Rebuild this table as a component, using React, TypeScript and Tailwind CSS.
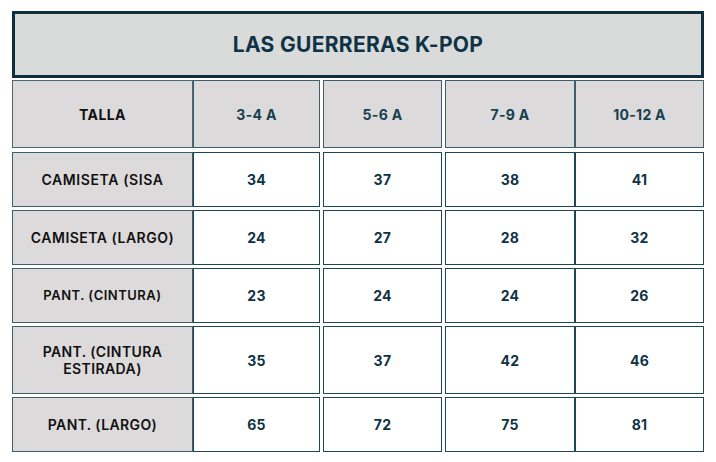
const cols = [
  "w-[181px]",
  "w-[127px]",
  "ml-[3px] w-[119px]",
  "ml-[3px] w-[130px]",
  "w-[129px]",
];

const rows: { label: string[]; box: string; text: string; values: string[] }[] = [
  { label: ["CAMISETA (SISA"], box: "mt-[4px] h-[55px]", text: "text-[14px] tracking-[0.6px]", values: ["34", "37", "38", "41"] },
  { label: ["CAMISETA (LARGO)"], box: "mt-[3px] h-[55px]", text: "text-[14px] tracking-[0.5px]", values: ["24", "27", "28", "32"] },
  { label: ["PANT. (CINTURA)"], box: "mt-[3px] h-[55px]", text: "text-[13px] tracking-[0.5px]", values: ["23", "24", "24", "26"] },
  { label: ["PANT. (CINTURA", "ESTIRADA)"], box: "mt-[3px] h-[68px]", text: "text-[14px] tracking-[0.4px]", values: ["35", "37", "42", "46"] },
  { label: ["PANT. (LARGO)"], box: "mt-[3px] h-[55px]", text: "text-[14px] tracking-[0.4px]", values: ["65", "72", "75", "81"] },
];

const sizes = ["3-4 A", "5-6 A", "7-9 A", "10-12 A"];

export default function App() {
  return (
    <div className="w-[716px] h-[462px] bg-white pt-[11px] pl-[12px] font-['Inter',sans-serif]">
      <div className="w-[692px] h-[67px] border-[3px] border-[#0f2f3f] bg-[#d9dbdb] flex items-center justify-center">
        <h1 className="text-[21px] font-bold text-[#0f3345] tracking-[0.3px]">LAS GUERRERAS K-POP</h1>
      </div>

      <div className="mt-[2px] flex h-[68px]">
        <div className={`${cols[0]} border border-[#4b6873] bg-[#dcdadb] flex items-center justify-center text-[14px] tracking-[0.4px] font-bold text-[#111]`}>
          TALLA
        </div>
        {sizes.map((s, i) => (
          <div
            key={s}
            className={`${cols[i + 1]} border border-[#3e5f6b] bg-[#dcdadb] flex items-center justify-center text-[14px] tracking-[0.3px] font-bold text-[#173f50]`}
          >
            {s}
          </div>
        ))}
      </div>

      {rows.map((r) => (
        <div key={r.label.join()} className={`flex ${r.box}`}>
          <div className={`${cols[0]} ${r.text} border border-[#3e5f6b] bg-[#dcdadb] flex flex-col items-center justify-center font-semibold leading-[17px] text-[#111]`}>
            {r.label.map((l) => (
              <span key={l}>{l}</span>
            ))}
          </div>
          {r.values.map((v, i) => (
            <div
              key={i}
              className={`${cols[i + 1]} border border-[#1e4657] bg-white flex items-center justify-center text-[14px] tracking-[0.3px] font-bold text-[#0f3345]`}
            >
              {v}
            </div>
          ))}
        </div>
      ))}
    </div>
  );
}
